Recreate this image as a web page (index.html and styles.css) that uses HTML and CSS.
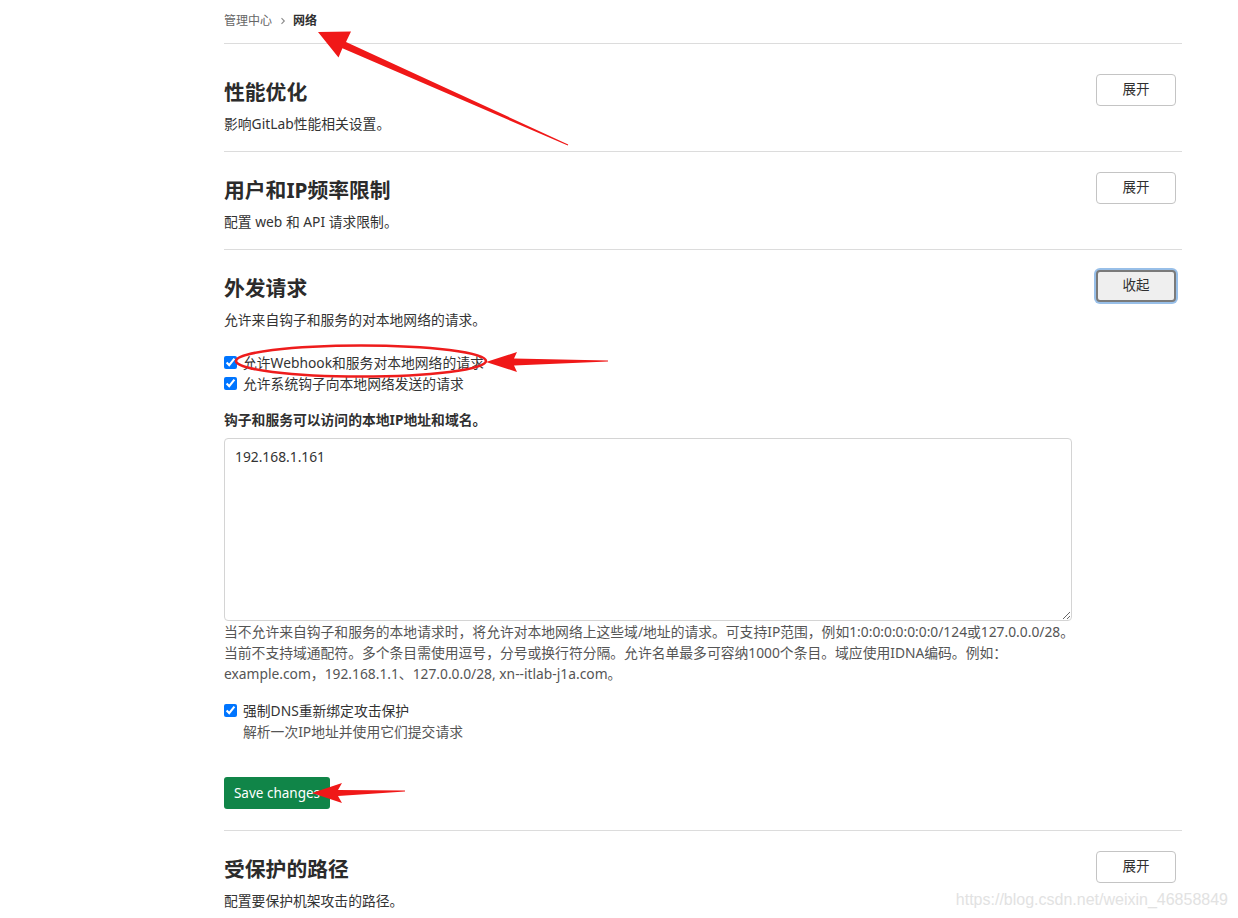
FILE: index.html
```html
<!DOCTYPE html>
<html lang="zh-CN">
<head>
<meta charset="utf-8">
<title>网络 · 管理中心</title>
<link rel="stylesheet" href="styles.css">
</head>
<body>
<div class="page">
  <nav class="crumbs">
    <span class="crumb">管理中心</span>
    <svg class="chev" width="8" height="8" viewBox="0 0 8 8"><path d="M2.5 1.2 L5.3 4 L2.5 6.8" fill="none" stroke="#8a8a8a" stroke-width="1.1"/></svg>
    <span class="crumb current">网络</span>
  </nav>

  <section class="panel first">
    <div class="panel-head">
      <h2 class="panel-title">性能优化</h2>
      <button class="btn">展开</button>
    </div>
    <p class="panel-desc">影响GitLab性能相关设置。</p>
  </section>

  <section class="panel">
    <div class="panel-head">
      <h2 class="panel-title">用户和IP频率限制</h2>
      <button class="btn">展开</button>
    </div>
    <p class="panel-desc">配置 web 和 API 请求限制。</p>
  </section>

  <section class="panel expanded">
    <div class="panel-head">
      <h2 class="panel-title">外发请求</h2>
      <button class="btn active">收起</button>
    </div>
    <p class="panel-desc">允许来自钩子和服务的对本地网络的请求。</p>

    <form class="settings">
      <div class="checks">
        <label class="check"><input type="checkbox" checked><span>允许Webhook和服务对本地网络的请求</span></label>
        <label class="check"><input type="checkbox" checked><span>允许系统钩子向本地网络发送的请求</span></label>
      </div>

      <div class="field">
        <label class="field-label">钩子和服务可以访问的本地IP地址和域名。</label>
        <textarea class="ta">192.168.1.161</textarea>
        <p class="help">当不允许来自钩子和服务的本地请求时，将允许对本地网络上这些域/地址的请求。可支持IP范围，例如1:0:0:0:0:0:0:0/124或127.0.0.0/28。<br>当前不支持域通配符。多个条目需使用逗号，分号或换行符分隔。允许名单最多可容纳1000个条目。域应使用IDNA编码。例如：<br>example.com，192.168.1.1、127.0.0.0/28, xn--itlab-j1a.com。</p>
      </div>

      <div class="dns">
        <label class="check"><input type="checkbox" checked><span>强制DNS重新绑定攻击保护</span></label>
        <p class="dns-help">解析一次IP地址并使用它们提交请求</p>
      </div>

      <button type="button" class="btn-save">Save changes</button>
    </form>
  </section>

  <section class="panel">
    <div class="panel-head">
      <h2 class="panel-title">受保护的路径</h2>
      <button class="btn">展开</button>
    </div>
    <p class="panel-desc">配置要保护机架攻击的路径。</p>
  </section>
</div>

<svg class="annot" width="1238" height="918" viewBox="0 0 1238 918">
  <polygon fill="#f01818" points="568.2,144.4 346,42 351,31.5 318,32 338.5,57.5 342.4,48.2 567.8,145.6"/>
  <ellipse cx="361" cy="361" rx="125" ry="15.5" fill="none" stroke="#ee1c1c" stroke-width="2.6"/>
  <polygon fill="#f01818" points="608,360.5 514,358.4 517,352 486,362 517,372 514,365.6 608,361.5"/>
  <polygon fill="#f01818" points="405,790.5 338,790.1 342,783 312,793 342,803 338,795.9 405,791.5"/>
</svg>

<div class="watermark">https://blog.csdn.net/weixin_46858849</div>
</body>
</html>
```

FILE: styles.css
```css
* { box-sizing: border-box; }

html, body {
  margin: 0;
  padding: 0;
  background: #ffffff;
}

body {
  font-family: "Noto Sans", "Noto Sans CJK SC", sans-serif;
  color: #303030;
  font-size: 13.8px;
  position: relative;
  width: 1238px;
  height: 918px;
  overflow: hidden;
}

.page {
  margin-left: 224px;
  width: 958px;
}

.crumbs {
  display: flex;
  align-items: center;
  gap: 4px;
  padding: 11px 0 12px;
  border-bottom: 1px solid #dcdcdc;
  font-size: 12px;
  line-height: 20px;
}

.crumb { color: #666666; }
.crumb.current { color: #303030; font-weight: 700; }
.chev { margin: 0 2px 0 3px; }

.panel {
  padding: 20px 0 17px;
  border-bottom: 1px solid #dcdcdc;
}

.panel.first { padding-top: 30px; }
.panel.expanded { padding-bottom: 21px; }

.panel-head {
  display: flex;
  justify-content: space-between;
  align-items: flex-start;
}

.panel-title {
  margin: 4px 0 0;
  font-size: 20.8px;
  line-height: 28px;
  font-weight: 700;
  color: #2b2b2b;
}

.btn {
  width: 80px;
  height: 32px;
  margin-right: 6px;
  border: 1px solid #c4c4c4;
  border-radius: 4px;
  background: #ffffff;
  font-family: inherit;
  font-size: 13.5px;
  line-height: 18px;
  color: #303030;
  padding: 0 0 2px;
}

.btn.active {
  background: #efefef;
  border: 2px solid #7a7a7a;
  box-shadow: 0 0 0 2px #98bfe8;
}

.panel-desc {
  margin: 8px 0 0;
  line-height: 20px;
  color: #333333;
}

.settings {
  display: flex;
  flex-direction: column;
  align-items: flex-start;
  margin-top: 22px;
}

.checks {
  display: flex;
  flex-direction: column;
}

.check {
  display: flex;
  align-items: center;
  line-height: 21px;
  color: #333333;
}

.check input {
  width: 13px;
  height: 13px;
  margin: 0 6px 0 0;
}

.field {
  margin-top: 16px;
  width: 848px;
  display: flex;
  flex-direction: column;
}

.field-label {
  font-weight: 700;
  line-height: 20px;
  color: #303030;
  margin-bottom: 8px;
}

.ta {
  width: 848px;
  height: 183px;
  border: 1px solid #d4d4d4;
  border-radius: 4px;
  padding: 8px 10px;
  font-family: inherit;
  font-size: 13.8px;
  line-height: 20px;
  color: #333333;
  resize: vertical;
  display: block;
}

.help {
  margin: 0;
  line-height: 21px;
  color: #555555;
  white-space: nowrap;
}

.dns {
  margin-top: 16px;
}

.dns-help {
  margin: 0 0 0 19px;
  line-height: 21px;
  color: #555555;
}

.btn-save {
  margin-top: 35px;
  width: 106px;
  height: 32px;
  border: none;
  border-radius: 3px;
  background: #108548;
  color: #ffffff;
  font-family: inherit;
  font-size: 13.5px;
  padding: 0;
}

.annot {
  position: absolute;
  left: 0;
  top: 0;
  pointer-events: none;
}

.watermark {
  position: absolute;
  right: 10px;
  top: 890px;
  font-family: "Liberation Sans", Arial, sans-serif;
  font-size: 16px;
  line-height: 20px;
  color: #e2e2e2;
}
```
